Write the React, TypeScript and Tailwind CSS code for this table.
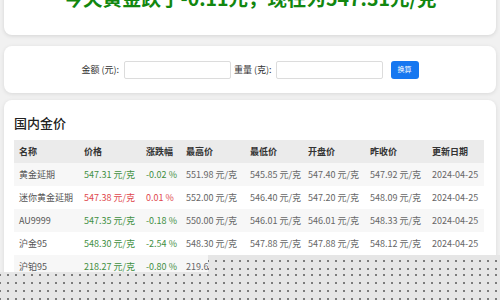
import React from "react";

const font = { fontFamily: '"Noto Sans CJK SC", "Noto Sans", sans-serif' };

type Row = {
  name: string;
  price: string;
  change: string;
  high: string;
  low: string;
  open: string;
  prev: string;
  date: string;
  up?: boolean;
};

const rows: Row[] = [
  { name: "黄金延期", price: "547.31 元/克", change: "-0.02 %", high: "551.98 元/克", low: "545.85 元/克", open: "547.40 元/克", prev: "547.92 元/克", date: "2024-04-25" },
  { name: "迷你黄金延期", price: "547.38 元/克", change: "0.01 %", high: "552.00 元/克", low: "546.40 元/克", open: "547.20 元/克", prev: "548.09 元/克", date: "2024-04-25", up: true },
  { name: "AU9999", price: "547.35 元/克", change: "-0.18 %", high: "550.00 元/克", low: "546.01 元/克", open: "546.01 元/克", prev: "548.33 元/克", date: "2024-04-25" },
  { name: "沪金95", price: "548.30 元/克", change: "-2.54 %", high: "548.30 元/克", low: "547.88 元/克", open: "547.88 元/克", prev: "548.12 元/克", date: "2024-04-25" },
  { name: "沪铂95", price: "218.27 元/克", change: "-0.80 %", high: "219.67 元/克", low: "217.50 元/克", open: "218.00 元/克", prev: "220.03 元/克", date: "2024-04-25" },
];

const cols = "grid grid-cols-[65px_62px_40px_64px_58px_62px_62px_57px]";

export default function App() {
  return (
    <div className="relative w-[500px] h-[300px] overflow-hidden bg-[#f1f1f1]" style={font}>
      <div className="flex flex-col px-[4px]">
        <div className="mt-[-30px] h-[65px] rounded-lg bg-white shadow-[0_1px_4px_rgba(0,0,0,0.12)] flex items-end justify-center pb-[27px]">
          <div className="text-[19.5px] leading-[20px] font-bold text-[#12870f] whitespace-nowrap">
            今天黄金跌了-0.11元，现在为547.31元/克
          </div>
        </div>

        <div className="mt-[11px] h-[47px] rounded-lg bg-white shadow-[0_1px_4px_rgba(0,0,0,0.10)] flex items-center justify-center">
          <span className="text-[9px] text-[#333] mr-[5px]">金额 (元):</span>
          <div className="w-[107px] h-[18px] border border-[#dcdcdc] rounded-[2px] bg-white" />
          <span className="text-[9px] text-[#333] ml-[3px] mr-[4px]">重量 (克):</span>
          <div className="w-[107px] h-[18px] border border-[#dcdcdc] rounded-[2px] bg-white" />
          <div className="ml-[8px] w-[28px] h-[18px] rounded-[3px] bg-[#1677f0] text-white text-[7px] flex items-center justify-center">
            换算
          </div>
        </div>

        <div className="mt-[7px] h-[220px] rounded-lg bg-white shadow-[0_1px_4px_rgba(0,0,0,0.10)] px-[10px] pt-[14px]">
          <div className="text-[13px] leading-[18px] font-medium text-[#222] mb-[8px]">国内金价</div>
          <div className="w-[470px]">
            <div className={`${cols} h-[23px] items-center bg-[#ebebeb] text-[9px] font-bold text-[#333]`}>
              <div className="pl-[5px]">名称</div>
              <div className="pl-[5px]">价格</div>
              <div className="pl-[5px]">涨跌幅</div>
              <div className="pl-[5px]">最高价</div>
              <div className="pl-[5px]">最低价</div>
              <div className="pl-[5px]">开盘价</div>
              <div className="pl-[5px]">昨收价</div>
              <div className="pl-[5px]">更新日期</div>
            </div>
            {rows.map((r, i) => (
              <div
                key={r.name}
                className={`${cols} h-[23px] items-center text-[9px] text-[#666] whitespace-nowrap ${i % 2 === 0 ? "bg-[#f7f7f7]" : "bg-white"}`}
              >
                <div className="pl-[5px] text-[#555]">{r.name}</div>
                <div className={`pl-[5px] ${r.up ? "text-[#e0474c]" : "text-[#3f8f3f]"}`}>{r.price}</div>
                <div className={`pl-[5px] ${r.up ? "text-[#e0474c]" : "text-[#3f8f3f]"}`}>{r.change}</div>
                <div className="pl-[5px]">{r.high}</div>
                <div className="pl-[5px]">{r.low}</div>
                <div className="pl-[5px]">{r.open}</div>
                <div className="pl-[5px]">{r.prev}</div>
                <div className="pl-[5px]">{r.date}</div>
              </div>
            ))}
          </div>
        </div>
      </div>

      <div className="absolute left-[208px] top-[255px] w-[292px] h-[17px] bg-[#e6e6e6] bg-[radial-gradient(circle,#555_0.6px,transparent_1px)] bg-[length:8px_8px] bg-[position:4px_2px]" />
      <div className="absolute left-0 top-[272px] w-[500px] h-[28px] bg-[#e6e6e6] bg-[radial-gradient(circle,#555_0.6px,transparent_1px)] bg-[length:8px_8px] bg-[position:4px_7px]" />
    </div>
  );
}
